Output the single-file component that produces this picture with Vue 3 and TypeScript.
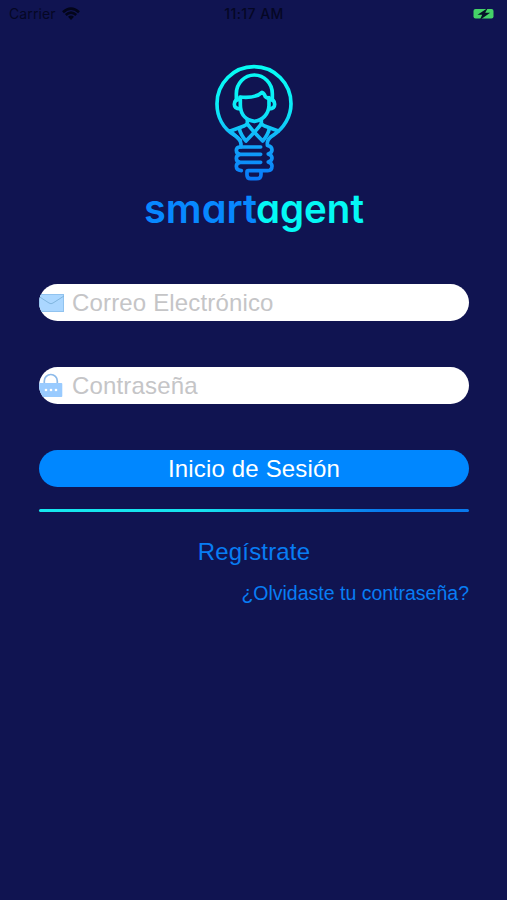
<script setup lang="ts">
import { ref } from 'vue'

const email = ref('')
const password = ref('')
</script>

<template>
  <main class="screen">
    <header class="status">
      <div class="carrier">
        <span>Carrier</span>
        <svg class="wifi" viewBox="0 0 18 14" aria-hidden="true">
          <path d="M1 5.2Q9-2 17 5.2" />
          <path d="M3.8 8Q9 3.4 14.2 8" />
          <path class="solid" d="M6 9.7Q9 7.2 12 9.7L9 13Z" />
        </svg>
      </div>
      <time class="clock">11:17 AM</time>
      <svg class="battery" viewBox="0 0 22 12" aria-hidden="true">
        <rect x="0.5" y="1" width="20" height="9.5" rx="2" />
        <path d="M14.8 0L4.5 6.8H9.2L6.8 12L17.2 4.8H12.2Z" />
      </svg>
    </header>

    <div class="brand">
      <svg class="bulb" viewBox="0 0 330 390" aria-hidden="true">
        <defs>
          <linearGradient id="bulbTone" gradientUnits="userSpaceOnUse" x1="0" y1="30" x2="0" y2="375">
            <stop offset="0" stop-color="#06fdf4" />
            <stop offset="0.4" stop-color="#0ce9f8" />
            <stop offset="0.68" stop-color="#12a8fa" />
            <stop offset="1" stop-color="#0878fa" />
          </linearGradient>
        </defs>
        <g stroke="url(#bulbTone)">
          <path d="M123 276V267Q121 252 104 241C68 220 51 184 51 146A111 111 0 0 1 273 146C273 184 252 220 219 241Q204 250 202 263V271Q216 274 216 285Q216 293 205 297Q216 301 216 309Q216 317 205 321Q216 325 216 333Q216 347 203 347H145Q141 347 141 351V360Q141 371 152 371H169Q183 371 183 359V348" />
          <path d="M109 134V116A54 56 0 0 1 217 116V134" />
          <path d="M120 126C151 129 174 124 186 112Q193 115 196 125Q200 129 207 130" />
          <path d="M121 128V152C122 181 140 196 163 199C187 196 206 178 207 152V128" />
          <path d="M119 133Q103 133 103 148Q103 161 121 162M208 133Q224 133 224 148Q224 161 207 162" />
          <path d="M142 196V205Q140 210 132 213L91 228M184 196V205Q186 210 194 213L235 228" />
          <path d="M91 228L121 256M118 220Q121 238 138 258L163 232L188 258Q205 238 208 220M142 207L163 232L184 207" />
          <path d="M182 276H121Q109 276 109 286Q109 297 121 298H182M121 298Q109 299 109 310Q109 321 121 322H182M121 322Q109 323 109 334Q109 346 124 347" />
        </g>
      </svg>
      <svg class="wordmark" viewBox="0 0 240 48">
        <text class="smart" x="9" y="35" textLength="113" lengthAdjust="spacingAndGlyphs">smart</text>
        <text class="agent" x="121" y="35" textLength="108" lengthAdjust="spacingAndGlyphs">agent</text>
      </svg>
    </div>

    <form class="form" @submit.prevent>
      <label class="field">
        <svg class="icon" viewBox="0 0 25 26" aria-hidden="true">
          <rect x="0.5" y="4.5" width="24" height="17" fill="#abd7ff" stroke="#91c3ef" />
          <path d="M0 6.5L10 13Q12 14.5 14 13L25 6" fill="none" stroke="#80b6df" />
        </svg>
        <input v-model="email" class="input mail" type="email" placeholder="Correo Electrónico">
      </label>
      <label class="field">
        <svg class="icon" viewBox="0 0 25 26" aria-hidden="true">
          <path d="M5.3 11V8a6.5 6.5 0 0 1 13 0V11" fill="none" stroke="#8ebbea" stroke-width="1.7" />
          <rect x="0" y="10" width="23.3" height="14" rx="1" fill="#99cbff" />
          <g fill="#fff"><circle cx="7" cy="17" r="1.3" /><circle cx="12" cy="17" r="1.3" /><circle cx="17" cy="17" r="1.3" /></g>
        </svg>
        <input v-model="password" class="input pass" type="password" placeholder="Contraseña">
      </label>
      <button class="login" type="submit"><span>Inicio de Sesión</span></button>
    </form>
    <div class="divider"></div>
    <nav class="links">
      <a class="register">Regístrate</a>
      <a class="forgot">¿Olvidaste tu contraseña?</a>
    </nav>
  </main>
</template>

<style>
body {
  background: #101451;
}
</style>

<style scoped>
.screen {
  box-sizing: border-box;
  width: 100%;
  height: 900px;
  overflow: hidden;
  background: #101451;
  font-family: "Liberation Sans", Arial, sans-serif;
}
.status {
  display: grid;
  grid-template-columns: 1fr auto 1fr;
  align-items: center;
  height: 27px;
  padding: 0 12px 0 9px;
  color: #050724;
  font: 14px/27px Inter, sans-serif;
}
.carrier {
  display: flex;
  align-items: center;
  gap: 6px;
  letter-spacing: 0.1px;
}
.wifi {
  width: 18px;
  height: 14px;
  fill: none;
  stroke: #03051a;
  stroke-width: 2.7;
}
.wifi .solid {
  fill: #03051a;
  stroke: none;
}
.clock {
  padding-left: 4px;
  font-weight: 500;
  letter-spacing: 0.45px;
}
.battery {
  justify-self: end;
  width: 22px;
  height: 12px;
  fill: #45d368;
}
.battery path {
  fill: #071229;
}
.brand {
  display: flex;
  flex-direction: column;
  align-items: center;
  height: 257px;
  padding-top: 28px;
  box-sizing: border-box;
}
.bulb {
  width: 110px;
  height: 130px;
  margin-left: 3px;
  fill: none;
  stroke-width: 11;
  stroke-linecap: round;
  stroke-linejoin: round;
}
.wordmark {
  width: 240px;
  height: 48px;
  margin-top: 3px;
  margin-left: 3px;
  overflow: visible;
  font: 600 40px Inter, sans-serif;
  font-feature-settings: "cv11";
}
.smart {
  fill: #0788ff;
}
.agent {
  fill: #04f8f5;
}
.form {
  display: flex;
  flex-direction: column;
  gap: 46px;
  padding: 0 38px 0 39px;
}
.field {
  display: flex;
  align-items: center;
  gap: 8px;
  height: 37px;
  overflow: hidden;
  border-radius: 19px;
  background: #fff;
}
.icon {
  flex: none;
  width: 25px;
  height: 26px;
}
.input {
  flex: 1;
  min-width: 0;
  height: 35px;
  padding: 0;
  border: 0;
  outline: 0;
  background: none;
  font: 24px/35px "Liberation Sans", Arial, sans-serif;
  letter-spacing: 0.16px;
  color: #222;
}
.input::placeholder {
  color: #c5c5c7;
  opacity: 1;
}
.login {
  height: 37px;
  padding: 0;
  border: 0;
  border-radius: 19px;
  background: #0087ff;
  color: #fff;
  font: 24px/37px "Liberation Sans", Arial, sans-serif;
  letter-spacing: 0.16px;
}
.divider {
  height: 3px;
  margin: 22px 38px 0 39px;
  border-radius: 2px;
  background: linear-gradient(90deg, #15e8ee, #16e2ee 38%, #0879ee 80%, #0878ed);
}
.links {
  display: flex;
  flex-direction: column;
  padding: 25px 38px 0 39px;
  color: #087df4;
}
.register {
  align-self: center;
  font-size: 24px;
  line-height: 30px;
  letter-spacing: 0.16px;
}
.forgot {
  align-self: flex-end;
  margin-top: 14px;
  font-size: 19.5px;
  line-height: 24px;
}
</style>
